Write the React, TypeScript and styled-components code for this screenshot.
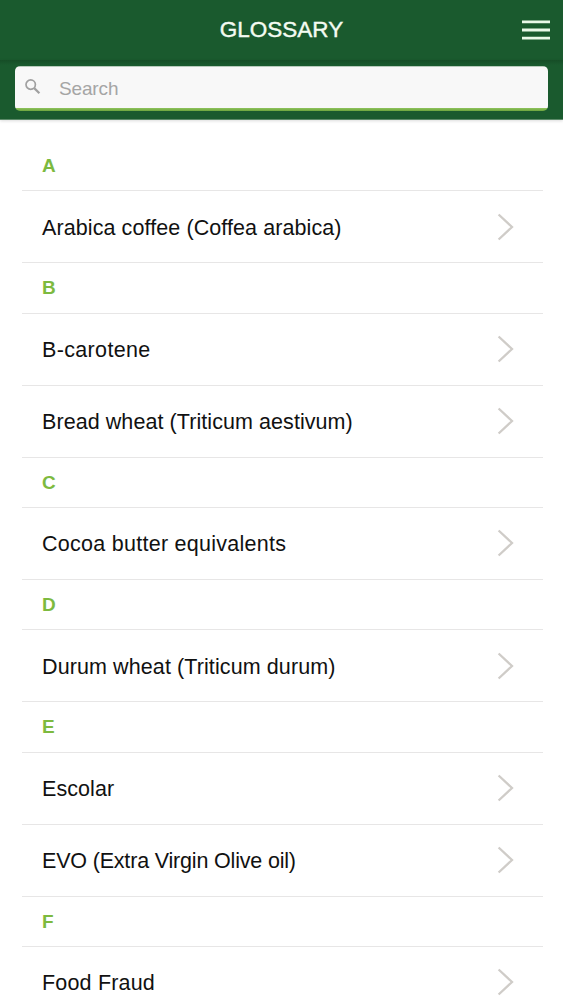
import React from 'react';
import styled, { createGlobalStyle } from 'styled-components';

const GlobalStyle = createGlobalStyle`
  * { box-sizing: border-box; }
  body { margin: 0; background: #fff; font-family: "Liberation Sans", Helvetica, Arial, sans-serif; }
`;

const Screen = styled.div`
  height: 1000px;
  overflow: hidden;
  background: #fff;
`;

const TopBar = styled.header`
  height: 60px;
  display: grid;
  grid-template-columns: 1fr auto 1fr;
  align-items: center;
  padding: 0 13px;
  background: #1a5a2e;
`;

const Title = styled.h1`
  grid-column: 2;
  margin: 0;
  font-size: 22.5px;
  font-weight: 400;
  line-height: 60px;
  color: #f4fbf2;
  -webkit-text-stroke: 0.4px #f4fbf2;
`;

const MenuButton = styled.button`
  justify-self: end;
  display: flex;
  padding: 0;
  border: 0;
  background: none;
`;

const SearchBar = styled.div`
  height: 60px;
  padding: 6px 15px 0;
  border-bottom: 1px solid #5c8a69;
  background: linear-gradient(#164d27 0, #1a5a2e 5px);
  box-shadow: 0 1px 3px rgba(0, 0, 0, 0.14);
`;

const SearchField = styled.label`
  display: flex;
  align-items: center;
  height: 45px;
  padding-left: 10px;
  border-radius: 5px;
  background: linear-gradient(#b9cbbd 1px, #f8f8f8 1px, #f8f8f8 42px, #8fc45c 42px, #6da53f 45px);
`;

const SearchInput = styled.input`
  flex: 1;
  margin-left: 17px;
  padding: 0;
  border: 0;
  outline: 0;
  background: none;
  font: 19px "Liberation Sans", Helvetica, Arial, sans-serif;
  letter-spacing: -0.15px;
  &::placeholder { color: #a5a5a5; opacity: 1; }
`;

const List = styled.main`
  padding: 21px 20px 0 22px;
`;

const Letter = styled.h2`
  margin: 0;
  height: 50.4px;
  padding-left: 20px;
  border-bottom: 1px solid #e7e6e6;
  font-size: 19px;
  font-weight: 700;
  line-height: 50px;
  color: #7dba3f;
`;

const Row = styled.div`
  display: flex;
  align-items: center;
  justify-content: space-between;
  height: 71.95px;
  padding: 0 28px 0 20px;
  border-bottom: 1px solid #e7e6e6;
`;

const Term = styled.span<{ $tracking: number }>`
  padding-top: 3px;
  font-size: 21.5px;
  letter-spacing: ${({ $tracking }) => $tracking}px;
  white-space: nowrap;
  color: #111;
`;

const sections: { letter: string; terms: [string, number][] }[] = [
  { letter: 'A', terms: [['Arabica coffee (Coffea arabica)', 0.09]] },
  { letter: 'B', terms: [['B-carotene', 0.35], ['Bread wheat (Triticum aestivum)', 0.07]] },
  { letter: 'C', terms: [['Cocoa butter equivalents', 0.27]] },
  { letter: 'D', terms: [['Durum wheat (Triticum durum)', 0.1]] },
  { letter: 'E', terms: [['Escolar', 0.08], ['EVO (Extra Virgin Olive oil)', -0.18]] },
  { letter: 'F', terms: [['Food Fraud', 0.18]] },
];

const Chevron = () => (
  <svg width="18" height="28" viewBox="0 0 18 28" fill="none" stroke="#cfccc8" strokeWidth="2.3">
    <path d="M1.6 1.5 15 14 1.6 26.5" />
  </svg>
);

export default function App() {
  return (
    <Screen>
      <GlobalStyle />
      <TopBar>
        <Title>GLOSSARY</Title>
        <MenuButton aria-label="Menu">
          <svg width="28" height="20" viewBox="0 0 28 20" stroke="#e9f8e8" strokeWidth="2.8">
            <path d="M0 1.9H28M0 10H28M0 18.1H28" />
          </svg>
        </MenuButton>
      </TopBar>
      <SearchBar>
        <SearchField>
          <svg width="17" height="19" viewBox="0 0 17 19" fill="none" stroke="#a0a0a0" strokeWidth="1.7">
            <circle cx="5.7" cy="5.6" r="4.7" />
            <path d="m9.2 9.1 5.2 5.2" strokeWidth="2.2" />
          </svg>
          <SearchInput placeholder="Search" />
        </SearchField>
      </SearchBar>
      <List>
        {sections.map(({ letter, terms }) => (
          <section key={letter}>
            <Letter>{letter}</Letter>
            {terms.map(([term, tracking]) => (
              <Row key={term}>
                <Term $tracking={tracking}>{term}</Term>
                <Chevron />
              </Row>
            ))}
          </section>
        ))}
      </List>
    </Screen>
  );
}
